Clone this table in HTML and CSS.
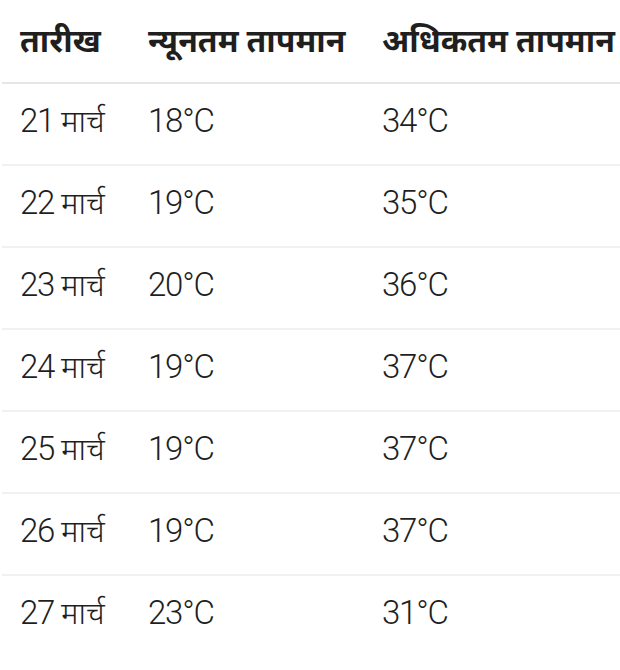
FILE: index.html
```html
<!DOCTYPE html>
<html lang="hi">
<head>
<meta charset="utf-8">
<link rel="stylesheet" href="styles.css">
</head>
<body>
<table class="temps">
  <colgroup>
    <col class="c1">
    <col class="c2">
    <col class="c3">
  </colgroup>
  <thead>
    <tr><th>तारीख</th><th>न्यूनतम तापमान</th><th>अधिकतम तापमान</th></tr>
  </thead>
  <tbody>
    <tr><td>21 <span class="dv">मार्च</span></td><td>18°C</td><td>34°C</td></tr>
    <tr><td>22 <span class="dv">मार्च</span></td><td>19°C</td><td>35°C</td></tr>
    <tr><td>23 <span class="dv">मार्च</span></td><td>20°C</td><td>36°C</td></tr>
    <tr><td>24 <span class="dv">मार्च</span></td><td>19°C</td><td>37°C</td></tr>
    <tr><td>25 <span class="dv">मार्च</span></td><td>19°C</td><td>37°C</td></tr>
    <tr><td>26 <span class="dv">मार्च</span></td><td>19°C</td><td>37°C</td></tr>
    <tr><td>27 <span class="dv">मार्च</span></td><td>23°C</td><td>31°C</td></tr>
  </tbody>
</table>
</body>
</html>
```
FILE: styles.css
```css
html, body {
  margin: 0;
  padding: 0;
  background: #ffffff;
  overflow: hidden;
}
.temps {
  margin-left: 2px;
  width: 640px;
  border-collapse: collapse;
  table-layout: fixed;
  font-family: Roboto, "Noto Sans", sans-serif;
  color: #1f1f1f;
}
.c1 { width: 128px; }
.c2 { width: 234px; }
.c3 { width: 278px; }
.temps th,
.temps td {
  padding: 0 0 0 18px;
  text-align: left;
  vertical-align: middle;
  white-space: nowrap;
}
.temps th {
  height: 82px;
  font-size: 32px;
  line-height: 40px;
  font-weight: 700;
  border-bottom: 2px solid #e6e6e6;
}
.temps td {
  height: 74px;
  padding-bottom: 6px;
  font-size: 33px;
  line-height: 40px;
  font-weight: 300;
  letter-spacing: -1.2px;
  border-bottom: 2px solid #f1f1f1;
}
.temps td .dv {
  font-size: 31px;
  font-weight: 300;
  letter-spacing: 0;
}
.temps tbody tr:last-child td {
  border-bottom: none;
}
```
